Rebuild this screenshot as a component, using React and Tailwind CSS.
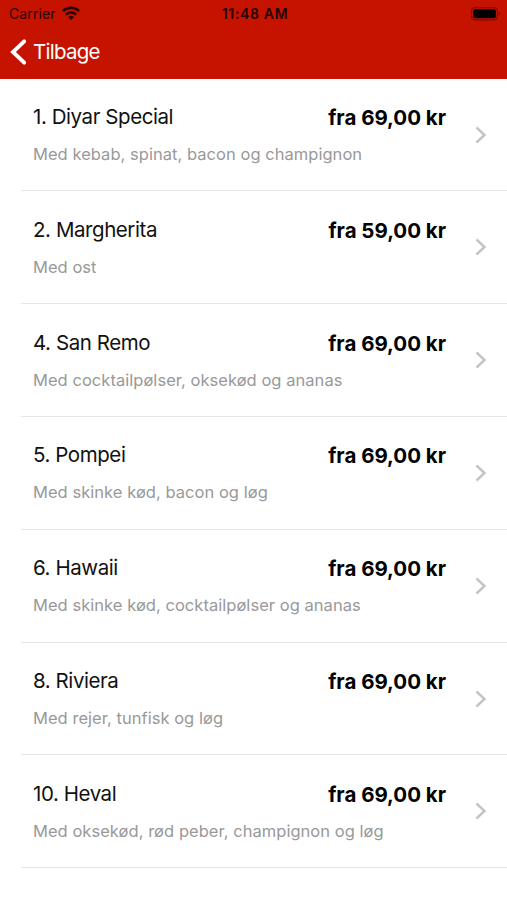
const pizzas = [
    { id: 1, name: '1. Diyar Special', price: 'fra 69,00 kr', toppings: 'Med kebab, spinat, bacon og champignon' },
    { id: 2, name: '2. Margherita', price: 'fra 59,00 kr', toppings: 'Med ost' },
    { id: 4, name: '4. San Remo', price: 'fra 69,00 kr', toppings: 'Med cocktailpølser, oksekød og ananas' },
    { id: 5, name: '5. Pompei', price: 'fra 69,00 kr', toppings: 'Med skinke kød, bacon og løg' },
    { id: 6, name: '6. Hawaii', price: 'fra 69,00 kr', toppings: 'Med skinke kød, cocktailpølser og ananas' },
    { id: 8, name: '8. Riviera', price: 'fra 69,00 kr', toppings: 'Med rejer, tunfisk og løg' },
    { id: 10, name: '10. Heval', price: 'fra 69,00 kr', toppings: 'Med oksekød, rød peber, champignon og løg' },
];

const WifiIcon = () => (
    <svg className="w-[18px] h-[14px] mb-[2px]" viewBox="0 0 18 14" fill="none" stroke="currentColor" strokeWidth="2.5">
        <path d="M0.9 5.2a11.5 11.5 0 0 1 16.2 0" />
        <path d="M3.8 8.7a7.4 7.4 0 0 1 10.4 0" />
        <path d="M9 14 6.2 11.1a4 4 0 0 1 5.6 0Z" fill="currentColor" stroke="none" />
    </svg>
);

const BatteryIcon = () => (
    <svg className="w-[30px] h-[14px]" viewBox="0 0 30 14">
        <rect x="0.6" y="0.6" width="25.8" height="12.3" rx="3.4" fill="none" stroke="#000" strokeOpacity="0.35" strokeWidth="1.2" />
        <rect x="2.2" y="2.2" width="22.6" height="9.1" rx="1.8" fill="#000" />
        <path d="M27.8 4.6c1.6.6 1.6 3.7 0 4.3Z" fill="#000" fillOpacity="0.4" />
    </svg>
);

const StatusBar = () => (
    <div className="grid grid-cols-3 items-center h-[27px] pl-[9px] pr-[6px] text-[#250200]">
        <div className="flex items-center gap-[6px]">
            <span className="text-[14px] leading-none tracking-[0.1px]">Carrier</span>
            <WifiIcon />
        </div>
        <span className="text-center text-[14px] leading-none font-semibold tracking-[0.65px]">11:48 AM</span>
        <div className="flex justify-end">
            <BatteryIcon />
        </div>
    </div>
);

const PizzaRow = ({ pizza }) => (
    <li className="flex items-center h-[112.8px] ml-[21px] pl-[12px] pr-[20px] border-b border-[#e6e6e6]">
        <div className="flex-1">
            <div className="flex items-start justify-between">
                <h2 className="text-[20.5px] leading-[26px] tracking-[-0.43px] text-[#111]">{pizza.name}</h2>
                <span className="pt-px text-[20.5px] leading-[26px] font-bold tracking-[-0.02px] text-black">{pizza.price}</span>
            </div>
            <p className="mt-[12px] text-[16.5px] leading-[22px] tracking-[0.04px] text-[#999] whitespace-nowrap">{pizza.toppings}</p>
        </div>
        <svg className="w-[12px] h-[18px] ml-[29px] text-[#c4c4c6]" viewBox="0 0 12 18" fill="none" stroke="currentColor" strokeWidth="2.4">
            <path d="M1.5 1.5 9.5 9l-8 7.5" />
        </svg>
    </li>
);

const App = () => {
    return (
        <div className="w-full h-[900px] overflow-hidden bg-white font-['Inter',sans-serif]">
            <header className="h-[78.7px] bg-[#c51300]">
                <StatusBar />
                <button className="flex items-center gap-[7px] h-[49px] pl-[10px] text-white">
                    <svg className="w-[16px] h-[26px]" viewBox="0 0 16 26" fill="none" stroke="currentColor" strokeWidth="3.9" strokeLinecap="round">
                        <path d="M14.2 2.4 3 13l11.2 10.6" />
                    </svg>
                    <span className="pt-px text-[20.5px] leading-none tracking-[-0.75px]">Tilbage</span>
                </button>
            </header>

            <ul>
                {pizzas.map((pizza) => (
                    <PizzaRow key={pizza.id} pizza={pizza} />
                ))}
            </ul>
        </div>
    );
};

export default App;
